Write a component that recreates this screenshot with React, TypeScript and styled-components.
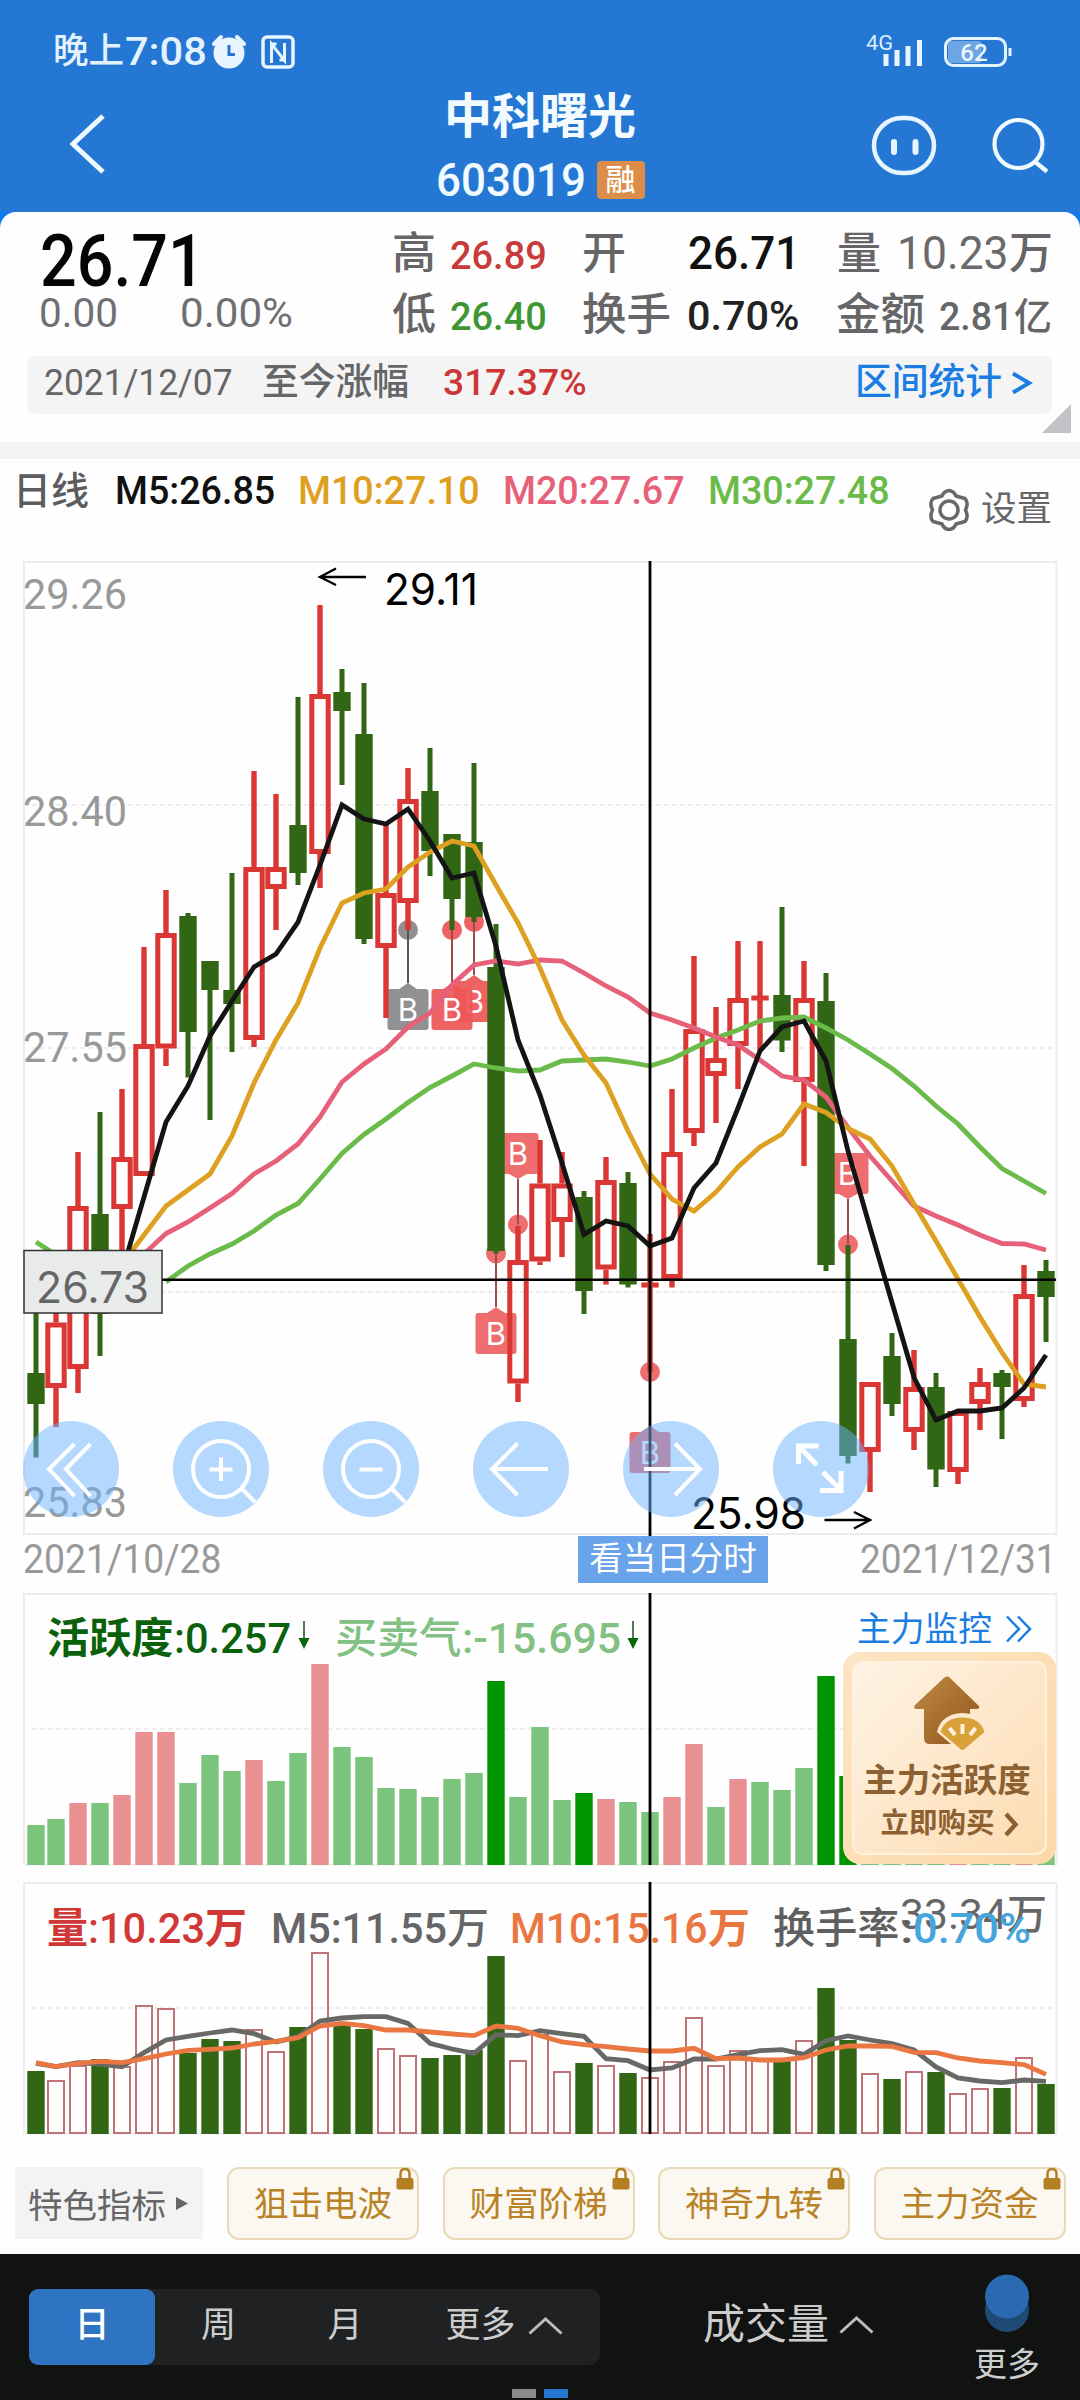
import React, { useLayoutEffect, useRef, useState } from "react";
import styled, { createGlobalStyle } from "styled-components";

const FIGURES = '"Roboto", "Noto Sans CJK SC", sans-serif';
const ROUND = '"Inter", "Noto Sans CJK SC", sans-serif';

const ink = {
  grey: "#666668",
  pale: "#999999",
  red: "#c93a3b",
  green: "#3d9632",
  blue: "#1a7de2",
  up: "#da3634",
  down: "#306614",
  ma5: "#141414",
  ma10: "#dda021",
  ma20: "#e6607a",
  ma30: "#6bbb4a",
  orange: "#ea7641",
};

const Global = createGlobalStyle`
  * { box-sizing: border-box; }
  body { margin: 0; background: #fefefe; font-family: ${FIGURES}; }
  svg { display: block; overflow: visible; }
`;

/* ---------- text fitted to its column ---------- */

const FitBox = styled.span<{ $w: number; $ml: number; $size: number; $weight: number; $color: string }>`
  display: inline-block;
  flex: none;
  width: ${(p) => p.$w}px;
  margin-left: ${(p) => p.$ml}px;
  font-size: ${(p) => p.$size}px;
  font-weight: ${(p) => p.$weight};
  line-height: 1;
  color: ${(p) => p.$color};
  white-space: nowrap;
`;
const FitInner = styled.span`
  display: inline-block;
  transform-origin: 0 50%;
`;

type FitProps = { w: number; size: number; ml?: number; weight?: number; color?: string; children: React.ReactNode };

function Fit({ w, size, ml = 0, weight = 500, color = ink.grey, children }: FitProps) {
  const ref = useRef<HTMLSpanElement>(null);
  const [scale, setScale] = useState(1);
  useLayoutEffect(() => {
    if (ref.current && ref.current.offsetWidth) setScale(w / ref.current.offsetWidth);
  }, [w, size, children]);
  return (
    <FitBox $w={w} $ml={ml} $size={size} $weight={weight} $color={color}>
      <FitInner ref={ref} style={{ transform: `scaleX(${scale})` }}>
        {children}
      </FitInner>
    </FitBox>
  );
}

const Line = styled.div<{ $h?: number; $pt?: number; $pl?: number }>`
  display: flex;
  align-items: baseline;
  height: ${(p) => (p.$h ? `${p.$h}px` : "auto")};
  padding-top: ${(p) => p.$pt ?? 0}px;
  padding-left: ${(p) => p.$pl ?? 0}px;
`;

/* ---------- header ---------- */

const Page = styled.div`
  width: 1080px;
  height: 2400px;
  display: flex;
  flex-direction: column;
  overflow: hidden;
  background: #fefefe;
`;
const Header = styled.header`
  flex: none;
  height: 212px;
  background: #2478d4;
  color: #e9f6ff;
`;
const StatusBar = styled.div`
  height: 80px;
  padding: 24px 66px 0 53px;
  display: flex;
  align-items: center;
`;
const Spacer = styled.div`
  flex: 1;
`;
const Clock = styled.div`
  display: flex;
  align-items: center;
`;
const StatusIcon = styled.svg<{ $ml: number }>`
  flex: none;
  margin-left: ${(p) => p.$ml}px;
`;
const NavBar = styled.div`
  height: 132px;
  display: grid;
  grid-template-columns: 380px 320px 380px;
`;
const NavLeft = styled.div`
  padding: 33px 0 0 68px;
`;
const NavRight = styled.div`
  display: flex;
  gap: 53px;
  padding: 34px 0 0 170px;
`;
const TitleBlock = styled.div`
  display: flex;
  flex-direction: column;
  align-items: center;
`;
const Title = styled.h1`
  margin: 9px 0 0;
  height: 56px;
  line-height: 56px;
  font-size: 48px;
  font-weight: 700;
  color: #f4fbff;
`;
const CodeRow = styled.div`
  margin-top: 13px;
  height: 44px;
  display: flex;
  align-items: center;
`;
const MarginBadge = styled.span`
  margin-left: 11px;
  width: 48px;
  height: 38px;
  border-radius: 4px;
  background: #dc8d49;
  color: #fff;
  font-size: 30px;
  font-weight: 500;
  line-height: 37px;
  text-align: center;
`;

/* ---------- quote summary ---------- */

const SummaryWrap = styled.div`
  flex: none;
  background: #0b7bef;
`;
const SummaryCard = styled.section`
  position: relative;
  height: 230px;
  background: #fefefe;
  border-radius: 16px 16px 0 0;
`;
const StatsGrid = styled.div`
  height: 144px;
  display: grid;
  grid-template-columns: 392px 1fr;
`;
const RangeBar = styled.div`
  margin: 0 28px 0 27px;
  height: 58px;
  border-radius: 8px;
  background: #f4f4f5;
  display: flex;
  align-items: center;
  padding-left: 17px;
  padding-bottom: 5px;
`;
const Corner = styled.svg`
  position: absolute;
  right: 9px;
  bottom: 9px;
`;
const Strip = styled.div`
  flex: none;
  height: 17px;
  background: #f3f3f4;
`;

/* ---------- chart area ---------- */

const Legend = styled.div`
  flex: none;
  height: 102px;
  display: flex;
  padding-left: 12px;
`;
const SettingsLink = styled.div`
  display: flex;
  align-items: center;
  height: 50px;
  margin: 26px 0 0 37px;
`;
const ChartFrame = styled.section<{ $h: number; $mb?: number }>`
  position: relative;
  flex: none;
  height: ${(p) => p.$h}px;
  margin-bottom: ${(p) => p.$mb ?? 0}px;
`;
const Backdrop = styled.svg`
  position: absolute;
  inset: 0;
`;
const Tools = styled.div`
  position: absolute;
  left: 23px;
  top: 860px;
  display: flex;
  gap: 54px;
`;
const RoundButton = styled.button`
  width: 96px;
  height: 96px;
  padding: 0;
  border: 0;
  border-radius: 50%;
  background: rgba(106, 178, 253, 0.5);
`;
const DateRow = styled.div`
  flex: none;
  height: 57px;
  display: flex;
  align-items: flex-start;
`;
const DayButton = styled.button`
  margin-left: 356px;
  width: 190px;
  height: 47px;
  padding: 0 0 3px;
  border: 0;
  background: #69a4ea;
  color: #fff;
  font: 400 33.5px/46px ${FIGURES};
`;
const PanelHead = styled.div`
  position: relative;
  display: flex;
  align-items: baseline;
  padding-left: 47px;
`;
const HeadArrow = styled.svg<{ $ml: number }>`
  margin-left: ${(p) => p.$ml}px;
`;
const MonitorLink = styled.div`
  display: flex;
  align-items: center;
  height: 40px;
  margin: -8px 0 0 218px;
  align-self: flex-start;
`;
const ScaleMax = styled.div`
  position: absolute;
  left: 900px;
  top: 11px;
`;
const BuyCard = styled.aside`
  position: absolute;
  left: 843px;
  top: 59px;
  width: 213px;
  height: 212px;
  padding: 9px;
  border-radius: 17px;
  background: linear-gradient(135deg, #fde4c3, #fdd9a9);
`;
const BuyInner = styled.div`
  width: 195px;
  height: 194px;
  border-radius: 11px;
  border: 2px solid #fff3df;
  background: linear-gradient(135deg, #fef3e4, #fddcb2);
  display: flex;
  flex-direction: column;
  align-items: center;
  padding: 11px 5px 0 0;
`;
const BuyName = styled.div`
  margin-top: 9px;
  font-size: 33.5px;
  line-height: 40px;
  font-weight: 700;
  color: #8c6030;
`;
const BuyAction = styled.div`
  display: flex;
  align-items: center;
  gap: 9px;
  padding-left: 5px;
  margin-top: 3px;
  font-size: 28.5px;
  line-height: 40px;
  font-weight: 700;
  color: #8c6030;
`;

/* ---------- chips and footer ---------- */

const Chips = styled.div`
  flex: none;
  height: 73px;
  margin: 33px 0 14px;
  padding-left: 15px;
  display: flex;
`;
const FeatureChip = styled.div`
  flex: none;
  width: 188px;
  height: 72px;
  background: #f3f3f3;
  color: ${ink.grey};
  display: flex;
  align-items: center;
  gap: 10px;
  padding-left: 13px;
  font-size: 34.5px;
  margin-right: 24px;
`;
const GoldChip = styled.div`
  position: relative;
  flex: none;
  width: 192px;
  height: 73px;
  margin-right: 23.5px;
  border: 2px solid #e9dab6;
  border-radius: 12px;
  background: #fbf8f1;
  color: #ba8226;
  font-size: 34.5px;
  line-height: 70px;
  text-align: center;
`;
const Lock = styled.svg`
  position: absolute;
  right: 3px;
  top: -2px;
`;
const Footer = styled.footer`
  position: relative;
  flex: none;
  height: 146px;
  background: #111212;
  display: flex;
  padding-left: 29px;
  color: #cdcdcd;
`;
const Segments = styled.div`
  flex: none;
  margin-top: 35px;
  width: 571px;
  height: 76px;
  border-radius: 10px;
  background: #202122;
  display: flex;
`;
const Segment = styled.div<{ $on?: boolean; $w: number }>`
  width: ${(p) => p.$w}px;
  border-radius: 9px;
  background: ${(p) => (p.$on ? "#2f74c3" : "transparent")};
  color: ${(p) => (p.$on ? "#ffffff" : "#cdcdcd")};
  font-size: 35px;
  font-weight: ${(p) => (p.$on ? 500 : 400)};
  line-height: 40px;
  display: flex;
  align-items: center;
  justify-content: center;
  gap: 12px;
  padding-bottom: 3px;
`;
const Indicator = styled.div`
  flex: none;
  margin: 33px 0 0 103px;
  height: 76px;
  width: 174px;
  display: flex;
  align-items: center;
  gap: 10px;
  font-size: 42px;
  line-height: 46px;
`;
const More = styled.div`
  flex: none;
  margin: 20px 0 0 85px;
  width: 90px;
  display: flex;
  flex-direction: column;
  align-items: center;
  font-size: 33px;
  line-height: 40px;
  gap: 11px;
`;
const Pager = styled.div`
  position: absolute;
  left: 512px;
  bottom: 2px;
  display: flex;
  gap: 8px;
`;
const PageDot = styled.span<{ $on?: boolean }>`
  width: 24px;
  height: 9px;
  background: ${(p) => (p.$on ? "#2676d2" : "#8b8b8b")};
`;

/* ---------- data ---------- */

const barX = (i: number) => (i === 0 ? 36 : 34 + 22 * i);

/* direction, high, body top, body bottom, low */
type Candle = ["r" | "g", number, number, number, number];
const candles: Candle[] = [
  ["g", 1300, 1373, 1404, 1457.5], ["r", 1300, 1322.5, 1388, 1427], ["r", 1152, 1206, 1369, 1393],
  ["g", 1112, 1214, 1314, 1356], ["r", 1089, 1157, 1209, 1280], ["r", 947, 1044, 1176, 1176],
  ["r", 890, 933, 1048.5, 1066], ["g", 913, 916, 1032, 1077.5], ["g", 961, 961, 990, 1120],
  ["g", 873, 990, 1004, 1052], ["r", 771, 867, 1040, 1047], ["r", 794, 867, 889, 930],
  ["g", 697, 825, 873, 885], ["r", 605, 694, 854, 888], ["g", 669, 692, 711, 785],
  ["g", 683, 734, 939, 944], ["r", 823, 893, 948, 1018], ["r", 768, 799, 903, 930],
  ["g", 748, 791, 851, 876], ["g", 834, 834, 899, 930], ["g", 763, 842, 917, 922],
  ["g", 924, 967, 1251, 1253.5], ["r", 1226, 1260, 1383.5, 1402], ["r", 1140, 1183.5, 1261.5, 1265],
  ["r", 1152, 1183.5, 1222, 1257], ["g", 1191, 1197, 1291, 1314], ["r", 1157, 1180, 1269.5, 1284.5],
  ["g", 1172, 1183, 1284.5, 1287.5], ["r", 1234, 1282.5, 1287.5, 1372], ["r", 1089, 1152, 1279, 1287.5],
  ["r", 956, 1029, 1133, 1146], ["r", 1007, 1058, 1076, 1123], ["r", 941, 998, 1046, 1089],
  ["r", 941, 995.5, 1000.5, 1051], ["g", 907, 995, 1040.5, 1052], ["r", 961, 998, 1082, 1166],
  ["g", 973, 1001, 1265, 1271], ["g", 1245, 1339, 1456, 1463.5], ["r", 1382, 1382, 1452, 1492],
  ["g", 1333, 1356, 1404, 1416], ["r", 1350, 1387, 1432, 1450], ["g", 1373, 1387, 1469.5, 1487],
  ["r", 1411, 1411, 1472, 1484], ["r", 1368, 1382, 1404, 1430], ["g", 1370, 1373, 1387, 1439],
  ["r", 1265, 1294, 1401, 1407], ["g", 1260, 1271, 1297, 1342],
];

const ma5 = [1272, 1197, 1122, 1086, 1036, 1001, 967, 954, 922, 865, 805, 819, 824, 809, 841, 878, 873, 946, 1040, 1095, 1163, 1234.5, 1221, 1226, 1246, 1238, 1188, 1163, 1108, 1051, 1027, 1021, 1061, 1151, 1227.5, 1302.5, 1377.5, 1420, 1411, 1411, 1408, 1388, 1355];
const ma10 = [1264, 1235, 1206, 1190, 1174, 1136, 1083, 1040, 1003, 948, 903, 893, 889, 867, 852, 841, 846, 885, 923, 968, 1020, 1055, 1083, 1131, 1174, 1199, 1211, 1192, 1167, 1147, 1134, 1104, 1112.5, 1128.5, 1139, 1166, 1204, 1241, 1279, 1317, 1352.5, 1384, 1387];
const ma20 = [1274, 1254, 1233.5, 1222, 1208, 1193.5, 1174, 1161, 1144, 1117, 1082, 1064, 1049, 1027, 1013, 985, 965, 961, 964, 960, 961, 973, 986, 997, 1013, 1020, 1028, 1037, 1045, 1060, 1076, 1080, 1097, 1127.5, 1156, 1181, 1206, 1216, 1225, 1235, 1243.5, 1244, 1250];
const ma30 = [1282, 1266, 1254, 1244, 1231, 1215, 1203.5, 1179, 1153.5, 1134.5, 1119, 1102.5, 1087.5, 1076, 1064, 1068, 1071, 1070, 1061, 1060, 1059, 1062, 1066, 1059, 1048, 1038, 1030, 1021, 1018, 1017, 1028, 1040, 1054, 1068.5, 1086, 1106, 1124, 1147, 1168.5, 1181, 1193.5];

const points = (ys: number[], from: number) => ys.map((y, k) => `${barX(from + k)},${y}`).join(" ");

/* bar index, dot y, tag tip y, tag below the dot */
const markers: [number, number, number, boolean, string][] = [
  [17, 930, 983, true, "#88888c"],
  [20, 922, 975, true, "#ee5557"],
  [19, 930, 983, true, "#ee5557"],
  [21, 1253.5, 1307, true, "#ed6264"],
  [22, 1224.5, 1179, false, "#ed6264"],
  [28, 1372, 1426, true, "#ed6264"],
  [37, 1244.5, 1199, false, "#ed6264"],
];

const activity: [string, number][] = [
  ["l", 40], ["l", 46], ["p", 62], ["l", 62], ["p", 70], ["p", 133], ["p", 133], ["l", 82], ["l", 110], ["l", 94],
  ["p", 105], ["l", 84], ["l", 112], ["p", 201], ["l", 118], ["l", 108], ["l", 77], ["l", 76], ["l", 68], ["l", 86],
  ["l", 92], ["d", 184], ["l", 68], ["l", 138], ["l", 65], ["d", 72], ["p", 66], ["l", 63], ["l", 53], ["p", 68],
  ["p", 121], ["l", 58], ["p", 86], ["l", 83], ["l", 75], ["l", 97], ["d", 189], ["d", 89], ["l", 60], ["l", 60],
  ["l", 60], ["l", 60], ["p", 60], ["l", 60], ["l", 60], ["p", 60], ["l", 60],
];
const activityFill: Record<string, string> = { l: "#7bc47c", p: "#e99091", d: "#009500" };

const volume = [
  63, 54, 69, 75, 68, 129, 126, 81, 95, 93, 105, 83, 107, 182, 108, 105, 86, 79, 76, 79, 84, 178, 74, 100, 63, 71, 69,
  61, 57, 73, 117, 69, 84, 74, 74, 94, 146, 94, 61, 55, 63, 62, 41, 46, 46, 77, 50,
];
const vol5 = [580, 590, 578, 582, 590, 548, 510, 499, 489, 480, 491, 516, 500, 453, 444, 440, 440, 460, 520, 537, 550, 494, 497, 482, 491, 499, 566, 572, 600, 594, 567, 567, 554, 542, 539, 553, 512, 498, 510, 521, 540, 591, 624, 633, 638, 630, 634].map((v) => v / 3 - 12);
const vol10 = [578, 590, 580, 574, 578, 566, 552, 541, 538, 534, 522, 514, 503, 468, 460, 467, 480, 480, 486, 492, 497, 468, 475, 497, 516, 524, 530, 537, 543, 543, 535, 566, 564, 570, 570, 563, 540, 528, 528, 529, 547, 548, 564, 573, 578, 584, 613].map((v) => v / 3 - 12);

/* ---------- drawings ---------- */

function Marker({ i, dot, tip, below, fill }: { i: number; dot: number; tip: number; below: boolean; fill: string }) {
  const x = barX(i);
  const top = below ? tip + 6 : tip - 46;
  const nose = below
    ? `M${x - 9} ${top} L${x} ${tip} L${x + 9} ${top}Z`
    : `M${x - 9} ${tip - 5} L${x} ${tip} L${x + 9} ${tip - 5}Z`;
  return (
    <g>
      <g fill={fill} opacity={0.92}>
        <circle cx={x} cy={dot} r={10} />
        <path d={nose} />
        <rect x={x - 20.5} y={top} width={41} height={41} rx={3} />
      </g>
      <path d={`M${x} ${dot}V${tip}`} stroke={fill === "#88888c" ? "#55555a" : "#a24a4a"} strokeWidth={2} />
      <text x={x} y={top + 32} fill="#fff" fontFamily={ROUND} fontSize={31} textAnchor="middle">
        B
      </text>
    </g>
  );
}

function Grid({ ys }: { ys: number[] }) {
  return (
    <g stroke="#e9e9ee" strokeWidth={1.6} strokeDasharray="5 3">
      {ys.map((y) => (
        <path key={y} d={`M32 ${y}H1054`} />
      ))}
    </g>
  );
}

function PriceChart() {
  return (
    <Backdrop width={1080} height={975} viewBox="0 561 1080 975">
      <rect x={24} y={562} width={1032.5} height={972} fill="none" stroke="#ededf1" strokeWidth={2} />
      <Grid ys={[805, 1048, 1292]} />
      <g fill={ink.pale} fontFamily={FIGURES} fontSize={42}>
        <text x={23} y={609} textLength={104} lengthAdjust="spacingAndGlyphs">29.26</text>
        <text x={23} y={826} textLength={104} lengthAdjust="spacingAndGlyphs">28.40</text>
        <text x={23} y={1062} textLength={104} lengthAdjust="spacingAndGlyphs">27.55</text>
        <text x={23} y={1517} textLength={104} lengthAdjust="spacingAndGlyphs">25.83</text>
      </g>
      {markers.map(([i, dot, tip, below, fill]) => (
        <Marker key={i} i={i} dot={dot} tip={tip} below={below} fill={fill} />
      ))}
      {candles.map(([dir, high, top, bottom, low], i) => {
        const x = barX(i);
        if (dir === "g") {
          return (
            <g key={i} fill={ink.down}>
              <rect x={x - 2.5} y={high} width={5} height={low - high} />
              <rect x={x - 8.7} y={top} width={17.4} height={bottom - top} />
            </g>
          );
        }
        const doji = bottom - top <= 5;
        return (
          <g key={i} fill={ink.up}>
            <rect x={x - 2.7} y={high} width={5.4} height={(doji ? low : top) - high} />
            {doji ? (
              <rect x={x - 8.7} y={top} width={17.4} height={5} />
            ) : (
              <>
                <rect x={x - 8.2} y={top + 2.5} width={16.4} height={bottom - top - 5} fill="none" stroke={ink.up} strokeWidth={5} />
                <rect x={x - 2.7} y={bottom} width={5.4} height={low - bottom} />
              </>
            )}
          </g>
        );
      })}
      <g fill="none" strokeWidth={4.8}>
        <path d="M36 1242L56 1255" stroke={ink.ma30} />
        <polyline points={points(ma30, 6)} stroke={ink.ma30} />
        <polyline points={points(ma20, 4)} stroke={ink.ma20} />
        <polyline points={points(ma10, 4)} stroke={ink.ma10} />
        <polyline points={points(ma5, 4)} stroke={ink.ma5} />
      </g>
      <g stroke="#000" fill="none">
        <path d="M24 1279.7H1056" strokeWidth={2.4} />
        <path d="M650 561V1536" strokeWidth={2.8} />
        <path d="M366 577H321M336 568.5L320 577L336 585" strokeWidth={2.4} />
        <path d="M824.5 1520H869M854 1512L870 1520L854 1528.5" strokeWidth={2.4} />
      </g>
      <g fontFamily={ROUND} fontSize={44} fill="#000">
        <text x={384} y={605} textLength={94} lengthAdjust="spacingAndGlyphs">29.11</text>
        <text x={691} y={1529} textLength={115} lengthAdjust="spacingAndGlyphs">25.98</text>
      </g>
      <rect x={24} y={1250.5} width={138} height={62.5} fill="#e9ebea" stroke="#333" strokeWidth={1.5} />
      <text x={36} y={1303} fontFamily={ROUND} fontSize={44} fill={ink.grey} textLength={113} lengthAdjust="spacingAndGlyphs">
        26.73
      </text>
    </Backdrop>
  );
}

const toolPaths: React.ReactNode[] = [
  <path d="M51.5 23L26 48L51.5 75M67.5 23L43 48L67.5 75" />,
  <><circle cx={48} cy={48} r={28} /><path d="M69 68L82 81M36.5 48.5H59.5M48 36.5V60" /></>,
  <><circle cx={48} cy={48} r={28} /><path d="M69 68L82 81M36.5 48.5H59.5" /></>,
  <path d="M44.5 22.5L19 48L44.5 74M19 48H75" />,
  <path d="M52 22.5L77 48L52 74M77 48H21" />,
  <path strokeWidth={5} d="M45.500 25H25.500V43M25.500 25L44 44M47 69.500H68V50M68 69.500L50 51" />,
];

function DownArrow({ ml }: { ml: number }) {
  return (
    <HeadArrow $ml={ml} width={12} height={32} viewBox="0 0 12 32">
      <path d="M6 0V20" stroke="#1d4a1d" strokeWidth={1.5} />
      <path d="M0.500 17H11.500L6 28Z" fill="#0a640a" />
    </HeadArrow>
  );
}

function Caret() {
  return (
    <svg width={35} height={18} viewBox="0 0 35 18" fill="none" stroke="#bdbdbd" strokeWidth={3}>
      <path d="M1.500 16.500L17.500 2L33.500 16.500" />
    </svg>
  );
}

export default function App() {
  return (
    <Page>
      <Global />
      <Header>
        <StatusBar>
          <Clock>
            <Fit w={71} size={35.5} color="#e4f2ff">晚上</Fit>
            <Fit w={82} size={38} ml={1} color="#e4f2ff">7:08</Fit>
          </Clock>
          <StatusIcon $ml={5} width={34} height={34} viewBox="0 0 34 34">
            <circle cx={17} cy={18} r={15.500} fill="#e8f5ff" />
            <path d="M2 9L9 2M32 9L25 2" stroke="#e8f5ff" strokeWidth={4} strokeLinecap="round" />
            <path d="M17 10V19.500H23" stroke="#2478d4" strokeWidth={3} fill="none" />
          </StatusIcon>
          <StatusIcon $ml={15} width={34} height={34} viewBox="0 0 34 34" fill="none" stroke="#e8f5ff">
            <rect x={2} y={2} width={30} height={30} rx={4} strokeWidth={3.500} />
            <path d="M10.500 28V9L23.500 25.500V8M15.500 9H10.500M18.500 25H23.500" strokeWidth={3} />
          </StatusIcon>
          <Spacer />
          <StatusIcon $ml={0} width={60} height={34} viewBox="0 0 60 34">
            <text x={1} y={15} fontFamily={FIGURES} fontSize={21} fill="#dcefff" textLength={27} lengthAdjust="spacingAndGlyphs">4G</text>
            <path d="M21 19V31M32 15V31M43 11V31M54.500 5V31" stroke="#e8f5ff" strokeWidth={5} />
          </StatusIcon>
          <StatusIcon $ml={19} width={70} height={30} viewBox="0 0 70 30">
            <rect x={4} y={4} width={34} height={22} rx={4} fill="#6ea6e4" />
            <rect x={1.500} y={1.500} width={60} height={27} rx={8} fill="none" stroke="#e3f3ff" strokeWidth={3} />
            <path d="M66 11V19" stroke="#e3f3ff" strokeWidth={3} />
            <text x={30} y={24} fontFamily={FIGURES} fontWeight={500} fontSize={24} fill="#eaf7ff" textAnchor="middle">62</text>
          </StatusIcon>
        </StatusBar>
        <NavBar>
          <NavLeft>
            <svg width={40} height={62} viewBox="0 0 40 62" fill="none" stroke="#eef9ff" strokeWidth={5}>
              <path d="M35 3L5 31L35 59" />
            </svg>
          </NavLeft>
          <TitleBlock>
            <Title>中科曙光</Title>
            <CodeRow>
              <Fit w={150} size={46} color="#f0faff">603019</Fit>
              <MarginBadge>融</MarginBadge>
            </CodeRow>
          </TitleBlock>
          <NavRight>
            <svg width={68} height={64} viewBox="0 0 68 64" fill="none" stroke="#e6f5ff">
              <rect x={4} y={4} width={60} height={55} rx={28} strokeWidth={4.500} />
              <path d="M24 28V38M45.500 28V38" strokeWidth={6} strokeLinecap="round" />
            </svg>
            <svg width={60} height={64} viewBox="0 0 60 64" fill="none" stroke="#f0faff" strokeWidth={4.200}>
              <circle cx={27.500} cy={30} r={24} />
              <path d="M43 47L56 57.500" />
            </svg>
          </NavRight>
        </NavBar>
      </Header>

      <SummaryWrap>
        <SummaryCard>
          <StatsGrid>
            <div>
              <Line $pt={14} $pl={40} $h={81}>
                <Fit w={165} size={72} color="#050505">26.71</Fit>
              </Line>
              <Line $pl={39}>
                <Fit w={79} size={41} weight={400} color="#6f6f72">0.00</Fit>
                <Fit w={113} size={41} ml={62} weight={400} color="#6f6f72">0.00%</Fit>
              </Line>
            </div>
            <div>
              <Line $pt={18} $h={81}>
                <Fit w={44} size={44}>高</Fit>
                <Fit w={97} size={39.5} ml={14} color={ink.red}>26.89</Fit>
                <Fit w={44} size={44} ml={35}>开</Fit>
                <Fit w={112} size={46} ml={62} color="#111">26.71</Fit>
                <Fit w={44} size={44} ml={37}>量</Fit>
                <Fit w={112} size={46} ml={16} weight={400} color="#6a6a6d">10.23</Fit>
                <Fit w={44} size={44}>万</Fit>
              </Line>
              <Line>
                <Fit w={44} size={44}>低</Fit>
                <Fit w={97} size={39.5} ml={14} color={ink.green}>26.40</Fit>
                <Fit w={89} size={44.5} ml={35}>换手</Fit>
                <Fit w={113} size={41} ml={16} color="#222">0.70%</Fit>
                <Fit w={89} size={44.5} ml={36}>金额</Fit>
                <Fit w={74} size={39.5} ml={14}>2.81</Fit>
                <Fit w={38} size={38} ml={1}>亿</Fit>
              </Line>
            </div>
          </StatsGrid>
          <RangeBar>
            <Fit w={189} size={37.5} weight={400}>2021/12/07</Fit>
            <Fit w={147} size={37} ml={29}>至今涨幅</Fit>
            <Fit w={144} size={37.5} ml={34} color="#cc3636">317.37%</Fit>
            <Fit w={147} size={37} ml={268} weight={500} color={ink.blue}>区间统计</Fit>
            <StatusIcon $ml={9} width={22} height={24} viewBox="0 0 22 24" fill="none" stroke={ink.blue} strokeWidth={4}>
              <path d="M2 2.500L18 12L2 21.500" />
            </StatusIcon>
          </RangeBar>
          <Corner width={29} height={29}>
            <path d="M29 0V29H0Z" fill="#c3c3c7" />
          </Corner>
        </SummaryCard>
      </SummaryWrap>
      <Strip />

      <Legend>
        <Line $pt={12}>
          <Fit w={76} size={38} ml={1} color="#5c5c5f">日线</Fit>
          <Fit w={160} size={39.5} ml={26} color="#111">M5:26.85</Fit>
          <Fit w={182} size={39.5} ml={23} color={ink.ma10}>M10:27.10</Fit>
          <Fit w={182} size={39.5} ml={23} color={ink.ma20}>M20:27.67</Fit>
          <Fit w={182} size={39.5} ml={23} color={ink.ma30}>M30:27.48</Fit>
        </Line>
        <SettingsLink>
          <svg width={44} height={44} viewBox="0 0 44 44" fill="none" stroke="#68686b" strokeWidth={3.500} strokeLinejoin="round">
            <path d="M22 2.500Q27 3 29 8L38 10.500Q42 15 38.500 22Q42 29 38 33.500L29 36Q27 41 22 41.500Q17 41 15 36L6 33.500Q2 29 5.500 22Q2 15 6 10.500L15 8Q17 3 22 2.500Z" />
            <circle cx={22} cy={22} r={9} />
          </svg>
          <Fit w={71} size={35.5} ml={10} weight={400}>设置</Fit>
        </SettingsLink>
      </Legend>

      <ChartFrame $h={975}>
        <PriceChart />
        <Tools>
          {toolPaths.map((drawing, i) => (
            <RoundButton key={i}>
              <svg width={96} height={96} viewBox="0 0 96 96" fill="none" stroke="#fff" strokeWidth={4}>
                {drawing}
              </svg>
            </RoundButton>
          ))}
        </Tools>
      </ChartFrame>

      <DateRow>
        <Line $pt={3} $pl={23}>
          <Fit w={199} size={40.5} weight={400} color={ink.pale}>2021/10/28</Fit>
        </Line>
        <DayButton>看当日分时</DayButton>
        <Line $pt={3} $pl={92}>
          <Fit w={197} size={40.5} weight={400} color={ink.pale}>2021/12/31</Fit>
        </Line>
      </DateRow>

      <ChartFrame $h={272} $mb={17}>
        <Backdrop width={1080} height={272}>
          <rect x={24} y={1} width={1032.5} height={270.500} fill="none" stroke="#ededf1" strokeWidth={2} />
          <Grid ys={[136]} />
          {activity.map(([tone, h], i) => (
            <rect key={i} x={barX(i) - 8.700} y={272 - h} width={17.400} height={h} fill={activityFill[tone]} />
          ))}
          <path d="M650 0V272" stroke="#000" strokeWidth={2.800} />
        </Backdrop>
        <Line $pt={24} $pl={0}>
          <PanelHead>
            <Fit w={127} size={42.5} weight={700} color="#0b610b">活跃度</Fit>
            <Fit w={117} size={43} color="#0b610b">:0.257</Fit>
            <DownArrow ml={7} />
            <Fit w={127} size={42.5} ml={25} color="#82c183">买卖气</Fit>
            <Fit w={159} size={43} color="#82c183">:-15.695</Fit>
            <DownArrow ml={6} />
            <MonitorLink>
              <Fit w={135} size={34} weight={400} color={ink.blue}>主力监控</Fit>
              <StatusIcon $ml={13} width={28} height={28} viewBox="0 0 28 28" fill="none" stroke={ink.blue} strokeWidth={2.500}>
                <path d="M2 1.500L14 14L2 26.500M13 1.500L25 14L13 26.500" />
              </StatusIcon>
            </MonitorLink>
          </PanelHead>
        </Line>
        <BuyCard>
          <BuyInner>
            <svg width={76} height={78} viewBox="0 0 76 78">
              <defs>
                <linearGradient id="roof" x1="0" y1="0" x2="1" y2="1">
                  <stop offset="0" stopColor="#c08a47" />
                  <stop offset="1" stopColor="#8f5518" />
                </linearGradient>
              </defs>
              <path d="M36 3Q38 2 40 3L70 32Q71 35 68 35H61V64Q61 70 56 70H21Q15 70 15 64V35H7Q4 34 6 31Z" fill="url(#roof)" />
              <path d="M28 58Q32 40 53.500 39Q75 40 79 58L53.500 80Z" fill="#fde9cf" />
              <path d="M31.500 58Q36 43.500 53.500 43.500Q71 43.500 75.500 58L55.500 75Q53.500 77 51.500 75Z" fill="#d9a138" />
              <path d="M53.500 50V60M40.500 54L46 61M66.500 54L61 61" stroke="#fff3df" strokeWidth={4} />
            </svg>
            <BuyName>主力活跃度</BuyName>
            <BuyAction>
              立即购买
              <svg width={15} height={25} viewBox="0 0 15 25" fill="none" stroke="#8c6030" strokeWidth={4.500}>
                <path d="M2 2L11.500 12.500L2 23" />
              </svg>
            </BuyAction>
          </BuyInner>
        </BuyCard>
      </ChartFrame>

      <ChartFrame $h={252}>
        <Backdrop width={1080} height={252}>
          <rect x={24} y={1} width={1032.500} height={250.500} fill="none" stroke="#ededf1" strokeWidth={2} />
          <Grid ys={[126]} />
          {volume.map((h, i) =>
            candles[i][0] === "g" ? (
              <rect key={i} x={barX(i) - 8.700} y={252 - h} width={17.400} height={h} fill={ink.down} />
            ) : (
              <rect key={i} x={barX(i) - 8} y={253 - h} width={16} height={h - 2} fill="none" stroke="#be7477" strokeWidth={2} />
            )
          )}
          <g fill="none" strokeWidth={4.800}>
            <polyline points={points(vol5, 0)} stroke="#686866" />
            <polyline points={points(vol10, 0)} stroke={ink.orange} />
          </g>
        </Backdrop>
        <ScaleMax>
          <Fit w={107} size={43} weight={400}>33.34</Fit>
          <Fit w={40} size={41}>万</Fit>
        </ScaleMax>
        <Line $pt={25}>
          <PanelHead>
            <Fit w={41} size={42} weight={700} color="#d03838">量</Fit>
            <Fit w={117} size={43} color="#d03838">:10.23</Fit>
            <Fit w={42} size={42} weight={700} color="#d03838">万</Fit>
            <Fit w={176} size={43} ml={24}>M5:11.55</Fit>
            <Fit w={42} size={42}>万</Fit>
            <Fit w={198} size={43} ml={21} color={ink.orange}>M10:15.16</Fit>
            <Fit w={42} size={42} weight={700} color={ink.orange}>万</Fit>
            <Fit w={127} size={42.500} ml={23} color="#5f5f60">换手率</Fit>
            <Fit w={13} size={43} color="#5f5f60">:</Fit>
            <Fit w={118} size={43} color="#45a5dd">0.70%</Fit>
          </PanelHead>
        </Line>
        <Backdrop width={1080} height={252}>
          <path d="M650 0V252" stroke="#000" strokeWidth={2.800} />
        </Backdrop>
      </ChartFrame>

      <Chips>
        <FeatureChip>
          特色指标
          <svg width={12} height={13} viewBox="0 0 12 13">
            <path d="M0 0L12 6.500L0 13Z" fill="#666" />
          </svg>
        </FeatureChip>
        {["狙击电波", "财富阶梯", "神奇九转", "主力资金"].map((name) => (
          <GoldChip key={name}>
            {name}
            <Lock width={18} height={24} viewBox="0 0 18 24">
              <path d="M4.500 12V7Q4.500 2 9 2Q13.500 2 13.500 7V12" fill="none" stroke="#b47f22" strokeWidth={2.500} />
              <rect x={0.500} y={11} width={17} height={11.500} rx={2} fill="#b47f22" />
            </Lock>
          </GoldChip>
        ))}
      </Chips>

      <Footer>
        <Segments>
          <Segment $w={126} $on>日</Segment>
          <Segment $w={127}>周</Segment>
          <Segment $w={126}>月</Segment>
          <Segment $w={192}>更多<Caret /></Segment>
        </Segments>
        <Indicator>成交量<Caret /></Indicator>
        <More>
          <svg width={46} height={60} viewBox="0 0 46 60">
            <circle cx={23} cy={36} r={22} fill="#1f4a75" />
            <circle cx={23} cy={22.500} r={22} fill="#2a6ab2" />
          </svg>
          更多
        </More>
        <Pager>
          <PageDot />
          <PageDot $on />
        </Pager>
      </Footer>
    </Page>
  );
}
